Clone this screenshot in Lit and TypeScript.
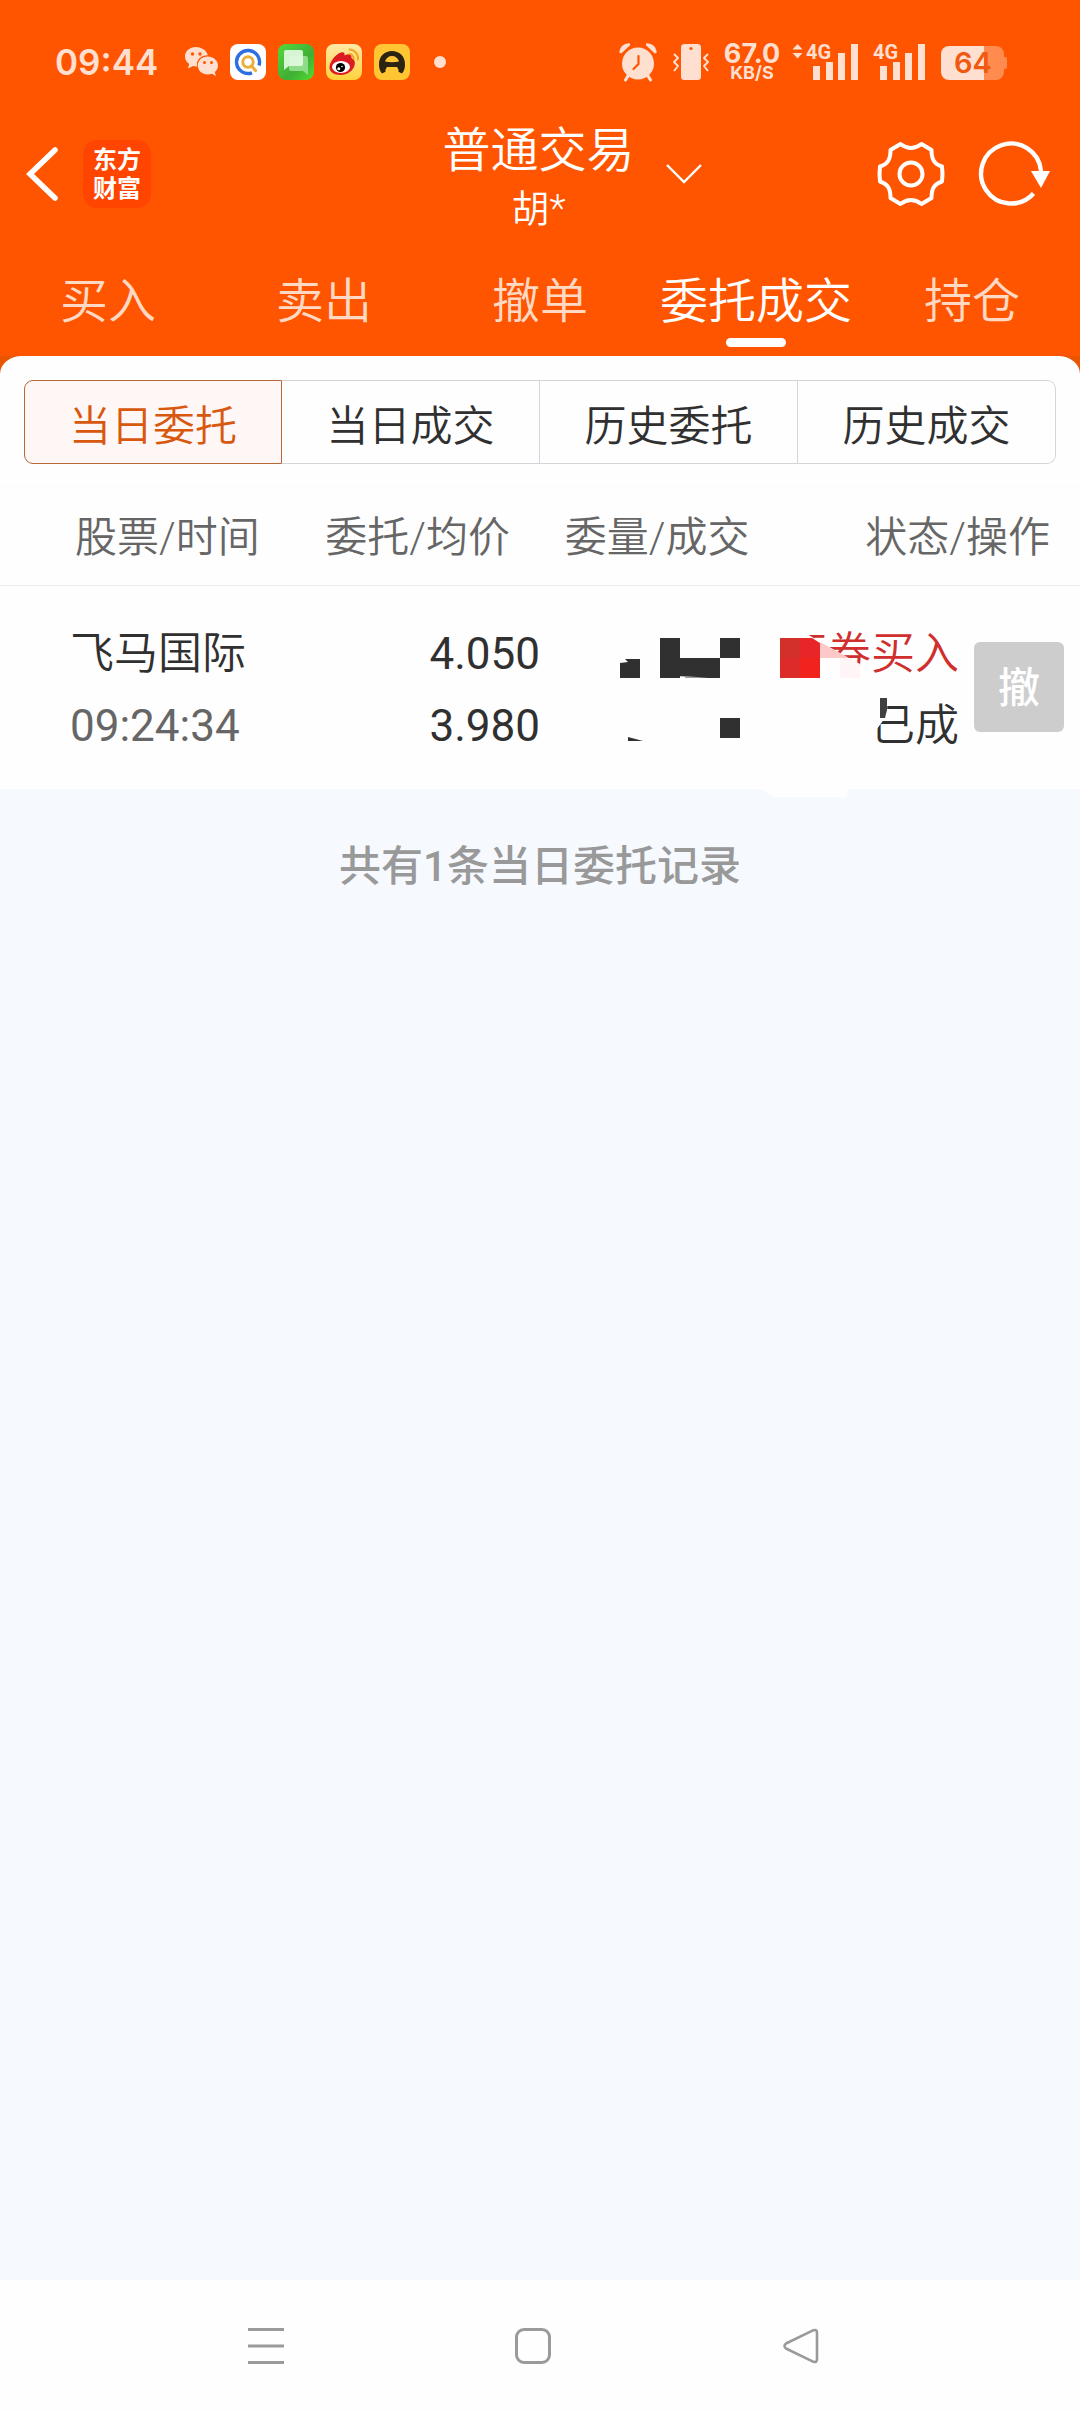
import { LitElement, html, css, svg } from "lit";
import { customElement, state } from "lit/decorators.js";

const CREAM = "#ffdfd0";

const wechatIcon = html`<svg width="34" height="32" viewBox="0 0 34 32" aria-hidden="true">
  <path fill="${CREAM}" d="M12 1C5.500 1 1 5.300 1 10.500c0 3.200 1.600 5.800 4.200 7.600L4 22.500l5-2.400c1.400.4 2.800.5 4.200.4-1.600-6.300 3.600-11.300 10.600-11.200C22.700 4.600 18 1 12 1z"/>
  <path fill="${CREAM}" d="M23.600 10.600c-5.600 0-9.800 4-9.800 8.800 0 5.200 4.600 9 9.900 9 1.500 0 2.800-.2 4.100-.7l4.200 2.400-1.200-4c2-1.600 3.200-3.900 3.200-6.500 0-5-4.600-9-10.400-9z"/>
  <circle cx="8.500" cy="8" r="1.700" fill="#ff5500"/><circle cx="16" cy="8" r="1.700" fill="#ff5500"/>
  <circle cx="20.500" cy="16.500" r="1.500" fill="#ff5500"/><circle cx="27.500" cy="16.500" r="1.500" fill="#ff5500"/>
</svg>`;

const searchApp = html`<svg width="36" height="36" viewBox="0 0 36 36" aria-hidden="true">
  <rect width="36" height="36" rx="8" fill="#fff"/>
  <path d="M29 21.500A11.500 11.500 0 1 0 22 28.800" fill="none" stroke="#2b6fe0" stroke-width="3.400"/>
  <circle cx="18" cy="18" r="5.200" fill="none" stroke="#e9b13c" stroke-width="3"/>
  <path d="M21.500 22l4 4.500" stroke="#e9b13c" stroke-width="3.200" stroke-linecap="round"/>
</svg>`;

const messageApp = html`<svg width="36" height="36" viewBox="0 0 36 36" aria-hidden="true">
  <defs><linearGradient id="g" x1="0" y1="0" x2="1" y2="1"><stop offset="0" stop-color="#55d83c"/><stop offset=".6" stop-color="#3fae35"/><stop offset="1" stop-color="#53dc30"/></linearGradient></defs>
  <rect width="36" height="36" rx="8" fill="url(#g)"/>
  <path d="M13 12h15a2 2 0 0 1 2 2v17l-5-4H13a2 2 0 0 1-2-2V14a2 2 0 0 1 2-2z" fill="#8fdc88"/>
  <path d="M8 6h15a2 2 0 0 1 2 2v12a2 2 0 0 1-2 2H11l-5 4V8a2 2 0 0 1 2-2z" fill="#e4f8e1" opacity=".92"/>
</svg>`;

const weiboApp = html`<svg width="36" height="36" viewBox="0 0 36 36" aria-hidden="true">
  <defs><linearGradient id="w" x1="0" y1="0" x2="0" y2="1"><stop offset="0" stop-color="#ffe9a8"/><stop offset="1" stop-color="#ffd23c"/></linearGradient></defs>
  <rect width="36" height="36" rx="8" fill="url(#w)"/>
  <path d="M15 8.500c3-1 4 .5 3.500 3 4-2 7.500-1.500 7 2.500 3 1.500 4 4 3 7.500C27 27 21 31 14.500 31 8 31 3.500 28 3.500 23.500 3.500 18 9.500 10 15 8.500z" fill="#dd1a22"/>
  <ellipse cx="15" cy="23" rx="9" ry="6" fill="#fff"/>
  <circle cx="14.500" cy="23.500" r="4.600" fill="#000"/><circle cx="12.800" cy="24.800" r="1.500" fill="#fff"/><circle cx="16" cy="22.500" r=".8" fill="#fff"/>
  <path d="M23.500 5.500a9 9 0 0 1 8.500 10M23.500 10a4.500 4.500 0 0 1 4.200 5" fill="none" stroke="#f0a622" stroke-width="2" stroke-linecap="round"/>
</svg>`;

const carApp = html`<svg width="36" height="36" viewBox="0 0 36 36" aria-hidden="true">
  <rect width="36" height="36" rx="8" fill="#ffc533"/>
  <path fill="#2b2412" d="M8 29.500C5.500 26.500 5 23.500 5 20 5 12 11 7 18 7s13 5 13 13c0 3.500-.5 6.500-3 9.500l-3.500-1.700V25.500L23 23H13l-1.500 2.500v2.300z"/>
  <path fill="#ffc533" d="M11 17.500Q13 12 18 12t7 5.500q-7 1.500-14 0z"/>
</svg>`;

const alarmIcon = html`<svg width="38" height="38" viewBox="0 0 38 38" aria-hidden="true">
  <circle cx="19" cy="20.500" r="16" fill="${CREAM}"/>
  <path d="M1.500 9Q2.500 2 10 1.500L2 9zM36.500 9Q35.500 2 28 1.500L36 9z" fill="${CREAM}" stroke="${CREAM}" stroke-width="2.400" stroke-linejoin="round"/>
  <path d="M9 33l-2.500 4M29 33l2.500 4" stroke="${CREAM}" stroke-width="3.200" stroke-linecap="round"/>
  <path d="M19.500 13v8l-5 5" fill="none" stroke="#ff5500" stroke-width="2.200" stroke-linecap="round"/>
</svg>`;

const vibrateIcon = html`<svg width="36" height="38" viewBox="0 0 36 38" aria-hidden="true">
  <rect x="8" y="1" width="20" height="36" rx="3.500" fill="${CREAM}"/><circle cx="18" cy="5.500" r="1.600" fill="#ff5500"/>
  <path d="M1 11l4 4-4 4 4 4-4 5M35 11l-4 4 4 4-4 4 4 5" fill="none" stroke="${CREAM}" stroke-width="2" stroke-linejoin="round"/>
</svg>`;

const bars = svg`<path fill="${CREAM}" d="M0 23h7v14H0zM13 19h7v18h-7zM25 10h7v27h-7zM38 1h7v36h-7z"/>`;

const signalData = html`<svg width="66" height="38" viewBox="0 0 66 38" aria-hidden="true">
  <path fill="${CREAM}" d="M5.500 1l5 5.500h-10zM5.500 15.500l5-5.500h-10z"/>
  <g transform="translate(21 0)">${bars}</g>
  <text class="net" x="14" y="16">4G</text>
</svg>`;

const signalPlain = html`<svg width="51" height="38" viewBox="0 0 51 38" aria-hidden="true">
  <g transform="translate(6 0)">${bars}</g>
  <text class="net" x="-1" y="16">4G</text>
</svg>`;

const batteryIcon = html`<svg width="66" height="38" viewBox="0 0 66 38" role="img" aria-label="64%">
  <path d="M43 3h12a8 8 0 0 1 8 8v3h1q2 0 2 2v8q0 2-2 2h-1v3a8 8 0 0 1-8 8H43z" fill="#ff8c4e"/>
  <path d="M43 3v34H8a8 8 0 0 1-8-8V11a8 8 0 0 1 8-8z" fill="${CREAM}"/>
  <text class="level" x="32" y="30">64</text>
</svg>`;

const backIcon = html`<svg width="32" height="54" viewBox="0 0 32 54" aria-hidden="true">
  <path d="M28 3L3 27l25 24" fill="none" stroke="#fff" stroke-width="5.500" stroke-linecap="round"/>
</svg>`;

const chevronIcon = html`<svg width="36" height="20" viewBox="0 0 36 20" aria-hidden="true">
  <path d="M1 1l17 17L35 1" fill="none" stroke="#fff" stroke-width="2.400"/>
</svg>`;

const gearIcon = html`<svg width="66" height="66" viewBox="0 0 66 66" aria-hidden="true">
  <path fill="none" stroke="#fff" stroke-width="4" stroke-linejoin="round"
    d="M22.500 3Q33 11 43.500 3L53.500 9C53.500 18 56 23 64 25.500Q65 33 64 40.500C56 43 53.500 48 53.500 57L43.500 63Q33 55 22.500 63L12.500 57C12.500 48 10 43 2 40.500Q1 33 2 25.500C10 23 12.500 18 12.500 9Z"/>
  <circle cx="33" cy="33" r="11.500" fill="none" stroke="#fff" stroke-width="4"/>
</svg>`;

const refreshIcon = html`<svg width="72" height="68" viewBox="0 0 72 68" aria-hidden="true">
  <path d="M55.500 53.500A30 30 0 1 1 63 31" fill="none" stroke="#fff" stroke-width="4.400"/>
  <path d="M53 31h19l-9 17z" fill="#fff"/>
</svg>`;

const mosaic = html`<svg class="mosaic" width="480" height="216" viewBox="0 0 480 216" aria-hidden="true">
  <path fill="#fefefe" d="M180 30L207 49L248 73L262 82V96H180zM268 100H288L287 130L277 144H268zM160 204L175 212H246L248 204z"/>
  <path fill="#303030" d="M20 78l8-1-3-3h15v19H20zM60 53h20v20h40v20l-45-2H60zM60 88h20v5H60zM85 92.500h35v.5H85zM120 53h20v20h-20zM120 133h20v20h-20zM28 152l15 4H28z"/>
  <path fill="#d4302b" d="M180 53h20v20h-20z"/><path fill="#e82628" d="M200 53h12l8 5v15h-20z"/>
  <path fill="#dd2b2a" d="M180 73h20v20h-20z"/><path fill="#f0231e" d="M200 73h20v20h-20z"/>
  <path fill="#fdc8c8" d="M220 57l29 16h-29z"/><path fill="#fff4f6" d="M240 73h9l11 6v14h-20z"/>
  <path fill="#404040" d="M280 113h7v12l-2 8h-5z"/>
</svg>`;

@customElement("app-root")
export class AppRoot extends LitElement {
  static styles = css`
    :host {
      display: flex;
      flex-direction: column;
      min-height: 100vh;
      background: #f6faff;
      color: #303030;
      font-family: Roboto, "Noto Sans CJK SC", sans-serif;
    }
    * { box-sizing: border-box; }
    svg { display: block; flex: none; overflow: visible; }
    button {
      margin: 0;
      padding: 0;
      border: 0;
      background: none;
      color: inherit;
      font: inherit;
      cursor: pointer;
    }
    .top { background: #ff5500; color: #fff; }
    .status {
      display: flex;
      justify-content: space-between;
      align-items: center;
      height: 110px;
      padding: 14px 73px 0 55px;
      color: #ffdfd0;
      font-family: Inter, Roboto, sans-serif;
    }
    .group { display: flex; align-items: center; gap: 12px; }
    .wide { gap: 16px; }
    .time { margin-right: 14px; font-size: 35px; font-weight: 600; line-height: 40px; }
    .dot { width: 12px; height: 12px; margin-left: 12px; border-radius: 50%; background: #ffdfd0; }
    .speed {
      display: flex;
      flex-direction: column;
      align-items: center;
      width: 54px;
      margin-right: -3px;
      font-size: 27px;
      font-weight: 700;
      line-height: 22px;
    }
    .unit { font-size: 18px; line-height: 16px; }
    .net { fill: #ffdfd0; font: 700 20px Roboto, sans-serif; }
    .level { fill: #f0590f; font: 600 29px Inter, sans-serif; text-anchor: middle; }
    .header {
      display: grid;
      grid-template-columns: 1fr auto 1fr;
      align-items: center;
      height: 128px;
      padding: 0 30px 0 27px;
    }
    .side { display: flex; align-items: center; }
    .ends { justify-content: space-between; padding-left: 31px; }
    .actions { display: flex; align-items: center; gap: 34px; }
    .logo {
      display: flex;
      flex-direction: column;
      justify-content: center;
      width: 68px;
      height: 68px;
      margin-left: 24px;
      padding-bottom: 4px;
      border-radius: 14px;
      background: #ff4500;
      font: 700 24px/29px "Noto Sans CJK SC", sans-serif;
      text-align: center;
    }
    .title { margin: 0; font-size: 48px; font-weight: 350; line-height: 80px; }
    .account { margin: 0; padding-bottom: 10px; font-size: 38px; font-weight: 350; line-height: 36px; text-align: center; }
    .tabs { display: grid; grid-template-columns: repeat(5, 1fr); height: 118px; padding-top: 28px; }
    .tab {
      display: flex;
      flex-direction: column;
      align-items: center;
      color: #ffd9c4;
      font-size: 48px;
      font-weight: 350;
      line-height: 72px;
      white-space: nowrap;
    }
    .tab[aria-selected="true"] { color: #fff; }
    .tab[aria-selected="true"]::after { content: ""; width: 60px; height: 9px; border-radius: 5px; background: #fff; }
    .shell { background: #e95500; }
    .panel { background: #fefefe; border-radius: 22px 22px 0 0 / 18px 18px 0 0; }
    .segments { display: grid; grid-template-columns: repeat(4, 1fr); padding: 24px 24px 22px; }
    .segment {
      height: 84px;
      border: 1px solid #d4d4da;
      border-left-width: 0;
      font-size: 42px;
      font-weight: 350;
    }
    .segment:first-child { border-left-width: 1px; border-radius: 9px 0 0 9px; }
    .segment:last-child { border-radius: 0 9px 9px 0; }
    .segment[aria-pressed="true"] { border: 1px solid #b8683a; background: #fff6f6; color: #d9580f; }
    .orders { position: relative; border-top: 1px solid #fafafa; }
    table { width: 100%; table-layout: fixed; border-collapse: collapse; }
    .col-wide { width: 25%; }
    .col-mid { width: 19.4%; }
    th, td { padding: 0; font-weight: 350; text-align: right; white-space: nowrap; }
    th { height: 98px; padding-top: 5px; border-bottom: 1px solid #ececec; color: #666; font-size: 42px; line-height: 60px; }
    td { height: 204px; padding-top: 6px; font-size: 44px; line-height: 72px; }
    .name { padding-left: 70px; text-align: left; }
    th.name { padding-left: 75px; }
    th.price, th.state { padding-right: 30px; }
    td.price, .time-sent { font-weight: 400; }
    .time-sent { color: #666; }
    .buy { color: #cf2f2d; }
    .line { display: block; }
    td.action { padding: 0; }
    .cancel {
      display: block;
      width: 90px;
      height: 90px;
      margin-left: 15px;
      padding-top: 4px;
      border-radius: 6px;
      background: #cdcdcd;
      color: #fff;
      font-size: 42px;
      font-weight: 500;
    }
    .mosaic { position: absolute; right: 0; bottom: -12px; pointer-events: none; }
    .count { margin: 0; padding-top: 48px; color: #999; font-size: 42px; font-weight: 500; line-height: 60px; text-align: center; }
    .nav {
      display: grid;
      grid-template-columns: repeat(3, 1fr);
      place-items: center;
      height: 132px;
      margin-top: auto;
      padding: 0 145px 0 132px;
      background: #fefefe;
    }
  `;

  @state() private tab = 3;
  @state() private segment = 0;

  private tabs = ["买入", "卖出", "撤单", "委托成交", "持仓"];
  private segments = ["当日委托", "当日成交", "历史委托", "历史成交"];

  render() {
    return html`
      <div class="top">
        <div class="status">
          <div class="group">
            <span class="time">09:44</span>
            ${wechatIcon}${searchApp}${messageApp}${weiboApp}${carApp}
            <span class="dot"></span>
          </div>
          <div class="group wide">
            ${alarmIcon}${vibrateIcon}
            <span class="speed">67.0<span class="unit">KB/S</span></span>
            ${signalData}${signalPlain}${batteryIcon}
          </div>
        </div>
        <header class="header">
          <div class="side">
            <button aria-label="返回">${backIcon}</button>
            <div class="logo"><span>东方</span><span>财富</span></div>
          </div>
          <div>
            <h1 class="title">普通交易</h1>
            <p class="account">胡*</p>
          </div>
          <div class="side ends">
            <button aria-label="切换账户">${chevronIcon}</button>
            <div class="actions">
              <button aria-label="设置">${gearIcon}</button>
              <button aria-label="刷新">${refreshIcon}</button>
            </div>
          </div>
        </header>
        <div class="tabs" role="tablist">
          ${this.tabs.map((label, i) => html`<button class="tab" role="tab"
            aria-selected=${i === this.tab ? "true" : "false"} @click=${() => (this.tab = i)}>${label}</button>`)}
        </div>
      </div>
      <main class="shell">
        <div class="panel">
          <div class="segments">
            ${this.segments.map((label, i) => html`<button class="segment"
              aria-pressed=${i === this.segment ? "true" : "false"} @click=${() => (this.segment = i)}>${label}</button>`)}
          </div>
          <div class="orders">
            <table>
              <colgroup>
                <col class="col-wide"><col class="col-wide"><col class="col-mid"><col class="col-mid"><col>
              </colgroup>
              <thead>
                <tr>
                  <th class="name">股票/时间</th>
                  <th class="price">委托/均价</th>
                  <th>委量/成交</th>
                  <th class="state" colspan="2">状态/操作</th>
                </tr>
              </thead>
              <tbody>
                <tr>
                  <td class="name">飞马国际<br><span class="time-sent">09:24:34</span></td>
                  <td class="price">4.050<br>3.980</td>
                  <td></td>
                  <td><span class="line buy">证券买入</span><span class="line">已成</span></td>
                  <td class="action"><button class="cancel">撤</button></td>
                </tr>
              </tbody>
            </table>
            ${mosaic}
          </div>
        </div>
      </main>
      <p class="count">共有1条当日委托记录</p>
      <nav class="nav">
        <button aria-label="最近任务"><svg width="36" height="36" viewBox="0 0 36 36"><path d="M0 1.500h36M0 18h36M0 34.500h36" stroke="#9a9a9a" stroke-width="3"/></svg></button>
        <button aria-label="主屏幕"><svg width="36" height="36" viewBox="0 0 36 36"><rect x="1.500" y="1.500" width="33" height="33" rx="7.500" fill="none" stroke="#9a9a9a" stroke-width="3"/></svg></button>
        <button aria-label="后退"><svg width="36" height="36" viewBox="0 0 36 36"><path d="M30.500 2.200L3 15.500q-3 2.500 0 5L30.500 33.800q3.500 1 3.500-2.500V4.700q0-3.500-3.500-2.500z" fill="none" stroke="#9a9a9a" stroke-width="2.600" stroke-linejoin="round"/></svg></button>
      </nav>
    `;
  }
}
